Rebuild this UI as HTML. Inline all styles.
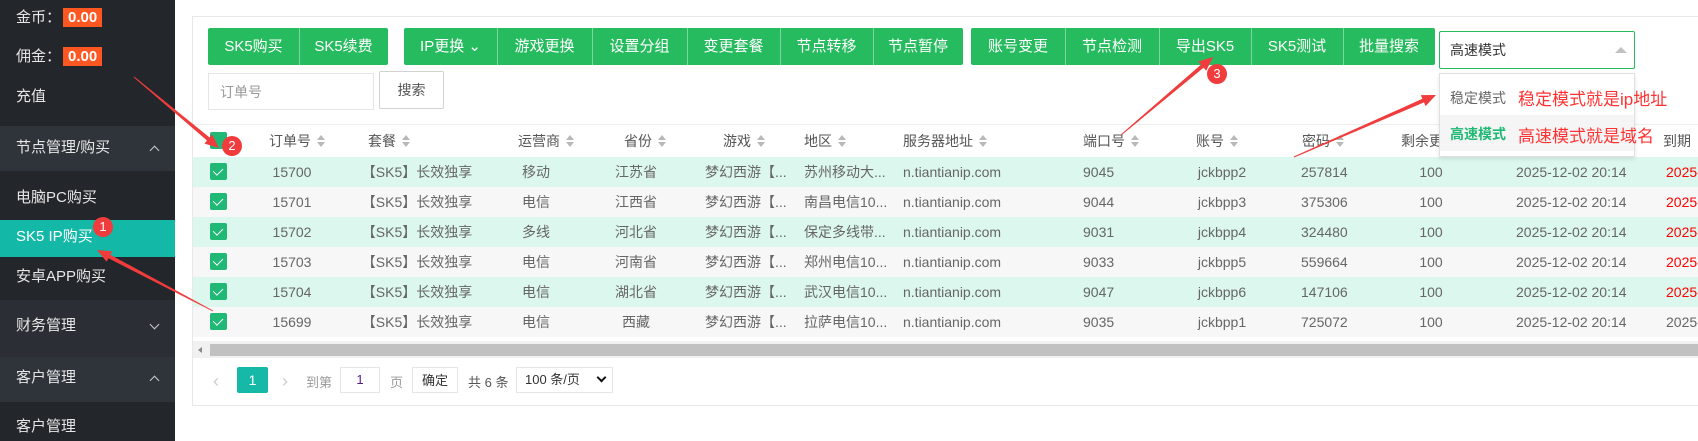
<!DOCTYPE html>
<html><head><meta charset="utf-8"><style>
*{box-sizing:border-box;margin:0;padding:0}
body{width:1698px;height:441px;overflow:hidden;background:#fff;font-family:"Liberation Sans","Noto Sans CJK SC",sans-serif;font-size:14px;color:#666;position:relative}
.a{position:absolute;white-space:nowrap}
#side{position:absolute;left:0;top:0;width:175px;height:441px;background:#23262b;color:#e6e6e6;font-size:15px}
.badge{background:#ff5722;color:#fff;font-weight:bold;font-size:15px;padding:0 5px;height:19px;line-height:19px}
.hd{position:absolute;left:0;width:175px;background:#2f343a}
.chev{position:absolute;width:7px;height:7px;border:solid #ccc;border-width:1.5px 0 0 1.5px}
.up{transform:rotate(45deg)}
.dn{transform:rotate(225deg)}
.btn{position:absolute;top:28px;height:37px;background:#27bb5f;color:#fff;font-size:15px;line-height:37px;text-align:center;border-radius:2px}
.sep{position:absolute;top:28px;width:1px;height:37px;background:#7dd6a0}
.row{position:absolute;left:193px;width:1505px;height:30px}
.cb{position:absolute;left:17px;top:6px;width:17px;height:17px;background:#1fb874;border-radius:2px}
.cb:after{content:"";position:absolute;left:5px;top:3px;width:5px;height:8px;border:solid #fff;border-width:0 1.5px 1.5px 0;transform:rotate(45deg)}
.c{position:absolute;top:0;line-height:30px;white-space:nowrap;font-size:14px;color:#666}
.ct{transform:translateX(-50%)}
.th{position:absolute;top:131px;font-size:14px;color:#555;white-space:nowrap}
.sort{display:inline-block;width:9px;height:14px;position:relative;vertical-align:middle;margin-left:6px}
.sort:before,.sort:after{content:"";position:absolute;left:0;border-left:4.5px solid transparent;border-right:4.5px solid transparent}
.sort:before{top:0;border-bottom:5px solid #b8b8b8}
.sort:after{top:7px;border-top:5px solid #b8b8b8}
.num{position:absolute;width:20px;height:20px;border-radius:50%;background:#f03c3c;color:#fff;font-size:13px;text-align:center;line-height:20px}
</style></head><body>
<div id="side">
<div class="a" style="left:16px;top:8px;line-height:20px">金币：</div><div class="a badge" style="left:63px;top:8px">0.00</div>
<div class="a" style="left:16px;top:47px;line-height:20px">佣金：</div><div class="a badge" style="left:63px;top:47px">0.00</div>
<div class="a" style="left:16px;top:87px;line-height:20px">充值</div>
<div class="hd" style="top:126px;height:45px"></div>
<div class="a" style="left:16px;top:138px;line-height:20px">节点管理/购买</div><div class="chev up" style="left:151px;top:147px"></div>
<div class="a" style="left:16px;top:188px;line-height:20px">电脑PC购买</div>
<div class="a" style="left:0;top:220px;width:175px;height:37px;background:#14b8a6"></div>
<div class="a" style="left:16px;top:227px;line-height:20px;color:#fff">SK5 IP购买</div>
<div class="a" style="left:16px;top:267px;line-height:20px">安卓APP购买</div>
<div class="hd" style="top:300px;height:57px;background:#2b2f35"></div>
<div class="a" style="left:16px;top:316px;line-height:20px">财务管理</div><div class="chev dn" style="left:151px;top:321px"></div>
<div class="hd" style="top:357px;height:45px"></div>
<div class="a" style="left:16px;top:368px;line-height:20px">客户管理</div><div class="chev up" style="left:151px;top:377px"></div>
<div class="a" style="left:16px;top:417px;line-height:20px">客户管理</div>
</div>
<div class="a" style="left:192px;top:16px;width:1506px;height:390px;border:1px solid #e8e8e8;border-right:none"></div>
<div class="btn" style="left:208px;width:180px"></div>
<div class="a" style="left:208px;top:28px;width:91px;line-height:37px;text-align:center;color:#fff;font-size:15px">SK5购买</div>
<div class="a" style="left:299px;top:28px;width:89px;line-height:37px;text-align:center;color:#fff;font-size:15px">SK5续费</div>
<div class="sep" style="left:299px"></div>
<div class="btn" style="left:404px;width:559px"></div>
<div class="btn" style="left:971px;width:464px"></div>
<div class="a" style="left:404px;top:28px;width:93px;line-height:37px;text-align:center;color:#fff;font-size:15px">IP更换 ⌄</div>
<div class="a" style="left:497px;top:28px;width:95px;line-height:37px;text-align:center;color:#fff;font-size:15px">游戏更换</div>
<div class="a" style="left:592px;top:28px;width:95px;line-height:37px;text-align:center;color:#fff;font-size:15px">设置分组</div>
<div class="a" style="left:687px;top:28px;width:93px;line-height:37px;text-align:center;color:#fff;font-size:15px">变更套餐</div>
<div class="a" style="left:780px;top:28px;width:93px;line-height:37px;text-align:center;color:#fff;font-size:15px">节点转移</div>
<div class="a" style="left:873px;top:28px;width:90px;line-height:37px;text-align:center;color:#fff;font-size:15px">节点暂停</div>
<div class="sep" style="left:497px"></div><div class="sep" style="left:592px"></div><div class="sep" style="left:687px"></div><div class="sep" style="left:780px"></div><div class="sep" style="left:873px"></div>
<div class="a" style="left:971px;top:28px;width:94px;line-height:37px;text-align:center;color:#fff;font-size:15px">账号变更</div>
<div class="a" style="left:1065px;top:28px;width:94px;line-height:37px;text-align:center;color:#fff;font-size:15px">节点检测</div>
<div class="a" style="left:1159px;top:28px;width:92px;line-height:37px;text-align:center;color:#fff;font-size:15px">导出SK5</div>
<div class="a" style="left:1251px;top:28px;width:92px;line-height:37px;text-align:center;color:#fff;font-size:15px">SK5测试</div>
<div class="a" style="left:1343px;top:28px;width:92px;line-height:37px;text-align:center;color:#fff;font-size:15px">批量搜索</div>
<div class="sep" style="left:1065px"></div><div class="sep" style="left:1159px"></div><div class="sep" style="left:1251px"></div><div class="sep" style="left:1343px"></div>
<div class="a" style="left:1439px;top:31px;width:196px;height:38px;border:1px solid #27bb5f;border-radius:2px"></div>
<div class="a" style="left:1450px;top:40px;color:#333;font-size:14px;line-height:20px">高速模式</div>
<div class="a" style="left:1615px;top:47px;border-left:6px solid transparent;border-right:6px solid transparent;border-bottom:6px solid #c2c2c2"></div>
<div class="a" style="left:208px;top:73px;width:166px;height:37px;border:1px solid #e6e6e6"></div>
<div class="a" style="left:220px;top:84px;color:#999;line-height:16px">订单号</div>
<div class="a" style="left:379px;top:71px;width:65px;height:38px;border:1px solid #d2d2d2;border-radius:2px;text-align:center;line-height:36px;color:#555">搜索</div>
<div class="a" style="left:193px;top:124px;width:1505px;height:1px;background:#eee"></div>
<div class="a" style="left:210px;top:132px;width:17px;height:17px;background:#1fb874;border-radius:2px"></div>
<div class="th" style="left:269px">订单号<span class="sort"></span></div>
<div class="th" style="left:368px">套餐<span class="sort"></span></div>
<div class="th" style="left:518px">运营商<span class="sort"></span></div>
<div class="th" style="left:624px">省份<span class="sort"></span></div>
<div class="th" style="left:723px">游戏<span class="sort"></span></div>
<div class="th" style="left:804px">地区<span class="sort"></span></div>
<div class="th" style="left:903px">服务器地址<span class="sort"></span></div>
<div class="th" style="left:1083px">端口号<span class="sort"></span></div>
<div class="th" style="left:1196px">账号<span class="sort"></span></div>
<div class="th" style="left:1302px">密码<span class="sort"></span></div>
<div class="th" style="left:1401px">剩余更换</div>
<div class="th" style="left:1663px">到期</div>

<div class="row" style="top:157px;background:#dcf7ee"><div class="cb"></div><div class="c ct" style="left:99px">15700</div><div class="c ct" style="left:224px">【SK5】长效独享</div><div class="c ct" style="left:343px">移动</div><div class="c ct" style="left:443px">江苏省</div><div class="c" style="left:512px">梦幻西游【...</div><div class="c" style="left:611px">苏州移动大...</div><div class="c" style="left:710px">n.tiantianip.com</div><div class="c" style="left:890px">9045</div><div class="c ct" style="left:1029px">jckbpp2</div><div class="c" style="left:1108px">257814</div><div class="c ct" style="left:1238px">100</div><div class="c" style="left:1323px">2025-12-02 20:14</div><div class="c" style="left:1473px;color:#f00">2025-12</div></div>
<div class="row" style="top:187px;background:#f7f7f7"><div class="cb"></div><div class="c ct" style="left:99px">15701</div><div class="c ct" style="left:224px">【SK5】长效独享</div><div class="c ct" style="left:343px">电信</div><div class="c ct" style="left:443px">江西省</div><div class="c" style="left:512px">梦幻西游【...</div><div class="c" style="left:611px">南昌电信10...</div><div class="c" style="left:710px">n.tiantianip.com</div><div class="c" style="left:890px">9044</div><div class="c ct" style="left:1029px">jckbpp3</div><div class="c" style="left:1108px">375306</div><div class="c ct" style="left:1238px">100</div><div class="c" style="left:1323px">2025-12-02 20:14</div><div class="c" style="left:1473px;color:#f00">2025-12</div></div>
<div class="row" style="top:217px;background:#dcf7ee"><div class="cb"></div><div class="c ct" style="left:99px">15702</div><div class="c ct" style="left:224px">【SK5】长效独享</div><div class="c ct" style="left:343px">多线</div><div class="c ct" style="left:443px">河北省</div><div class="c" style="left:512px">梦幻西游【...</div><div class="c" style="left:611px">保定多线带...</div><div class="c" style="left:710px">n.tiantianip.com</div><div class="c" style="left:890px">9031</div><div class="c ct" style="left:1029px">jckbpp4</div><div class="c" style="left:1108px">324480</div><div class="c ct" style="left:1238px">100</div><div class="c" style="left:1323px">2025-12-02 20:14</div><div class="c" style="left:1473px;color:#f00">2025-12</div></div>
<div class="row" style="top:247px;background:#f7f7f7"><div class="cb"></div><div class="c ct" style="left:99px">15703</div><div class="c ct" style="left:224px">【SK5】长效独享</div><div class="c ct" style="left:343px">电信</div><div class="c ct" style="left:443px">河南省</div><div class="c" style="left:512px">梦幻西游【...</div><div class="c" style="left:611px">郑州电信10...</div><div class="c" style="left:710px">n.tiantianip.com</div><div class="c" style="left:890px">9033</div><div class="c ct" style="left:1029px">jckbpp5</div><div class="c" style="left:1108px">559664</div><div class="c ct" style="left:1238px">100</div><div class="c" style="left:1323px">2025-12-02 20:14</div><div class="c" style="left:1473px;color:#f00">2025-12</div></div>
<div class="row" style="top:277px;background:#dcf7ee"><div class="cb"></div><div class="c ct" style="left:99px">15704</div><div class="c ct" style="left:224px">【SK5】长效独享</div><div class="c ct" style="left:343px">电信</div><div class="c ct" style="left:443px">湖北省</div><div class="c" style="left:512px">梦幻西游【...</div><div class="c" style="left:611px">武汉电信10...</div><div class="c" style="left:710px">n.tiantianip.com</div><div class="c" style="left:890px">9047</div><div class="c ct" style="left:1029px">jckbpp6</div><div class="c" style="left:1108px">147106</div><div class="c ct" style="left:1238px">100</div><div class="c" style="left:1323px">2025-12-02 20:14</div><div class="c" style="left:1473px;color:#f00">2025-12</div></div>
<div class="row" style="top:307px;background:#f7f7f7"><div class="cb"></div><div class="c ct" style="left:99px">15699</div><div class="c ct" style="left:224px">【SK5】长效独享</div><div class="c ct" style="left:343px">电信</div><div class="c ct" style="left:443px">西藏</div><div class="c" style="left:512px">梦幻西游【...</div><div class="c" style="left:611px">拉萨电信10...</div><div class="c" style="left:710px">n.tiantianip.com</div><div class="c" style="left:890px">9035</div><div class="c ct" style="left:1029px">jckbpp1</div><div class="c" style="left:1108px">725072</div><div class="c ct" style="left:1238px">100</div><div class="c" style="left:1323px">2025-12-02 20:14</div><div class="c" style="left:1473px">2025-12</div></div>

<div class="a" style="left:193px;top:341px;width:1505px;height:17px;background:#f1f1f1"></div>
<div class="a" style="left:210px;top:344px;width:1488px;height:12px;background:#c1c1c1"></div>
<div class="a" style="left:198px;top:347px;border-top:3px solid transparent;border-bottom:3px solid transparent;border-right:4px solid #888"></div>

<div class="a" style="left:213px;top:371px;color:#ccc;font-size:18px">‹</div>
<div class="a" style="left:237px;top:367px;width:31px;height:26px;background:#16b8a7;border-radius:2px;color:#fff;text-align:center;line-height:26px">1</div>
<div class="a" style="left:282px;top:371px;color:#ccc;font-size:18px">›</div>
<div class="a" style="left:306px;top:372px;color:#999;font-size:13px">到第</div>
<div class="a" style="left:340px;top:367px;width:40px;height:26px;border:1px solid #e6e6e6;text-align:center;line-height:24px;color:#551a8b;font-size:13px">1</div>
<div class="a" style="left:390px;top:372px;color:#999;font-size:13px">页</div>
<div class="a" style="left:412px;top:367px;width:46px;height:26px;border:1px solid #e6e6e6;text-align:center;line-height:26px;color:#333;font-size:13px">确定</div>
<div class="a" style="left:468px;top:372px;color:#555;font-size:13px">共 6 条</div>
<div class="a" style="left:516px;top:367px;width:97px;height:26px;border:1px solid #e6e6e6;line-height:24px;padding-left:8px;color:#333;font-size:13px">100 条/页</div>
<div class="a" style="left:598px;top:374px;width:7px;height:7px;border:solid #111;border-width:0 2px 2px 0;transform:rotate(45deg)"></div>

<div class="a" style="left:1439px;top:73px;width:196px;height:84px;background:#fff;border:1px solid #e0e0e0;box-shadow:0 2px 4px rgba(0,0,0,.1)"></div>
<div class="a" style="left:1440px;top:115px;width:194px;height:36px;background:#f5f5f5"></div>
<div class="a" style="left:1450px;top:88px;color:#666;font-size:14px">稳定模式</div>
<div class="a" style="left:1450px;top:124px;color:#1fb874;font-size:14px;font-weight:bold">高速模式</div>
<div class="a" style="left:1518px;top:85px;color:#f33;font-size:17px">稳定模式就是ip地址</div>
<div class="a" style="left:1518px;top:122px;color:#f33;font-size:17px">高速模式就是域名</div>

<svg class="a" style="left:0;top:0" width="1698" height="441">
<g fill="#f03c3c">
<polygon points="213.2,310.6 110.3,254.7 112.2,251.2 97,250 106.6,261.8 108.5,258.3 212.8,311.4"/>
<polygon points="133.7,77.4 207.0,140.5 204.5,143.6 219,148 212.1,134.4 209.6,137.5 134.3,76.6"/>
<polygon points="1121.3,135.4 1203.6,67.6 1206.2,70.7 1213,57 1198.4,61.5 1201.0,64.6 1120.7,134.6"/>
<polygon points="1294.2,157.5 1424.0,102.4 1425.6,106.1 1436,95 1420.8,95.1 1422.4,98.8 1293.8,156.5"/>
</g></svg>
<div class="num" style="left:93px;top:217px">1</div>
<div class="num" style="left:222px;top:136px">2</div>
<div class="num" style="left:1207px;top:64px">3</div>
</body></html>
